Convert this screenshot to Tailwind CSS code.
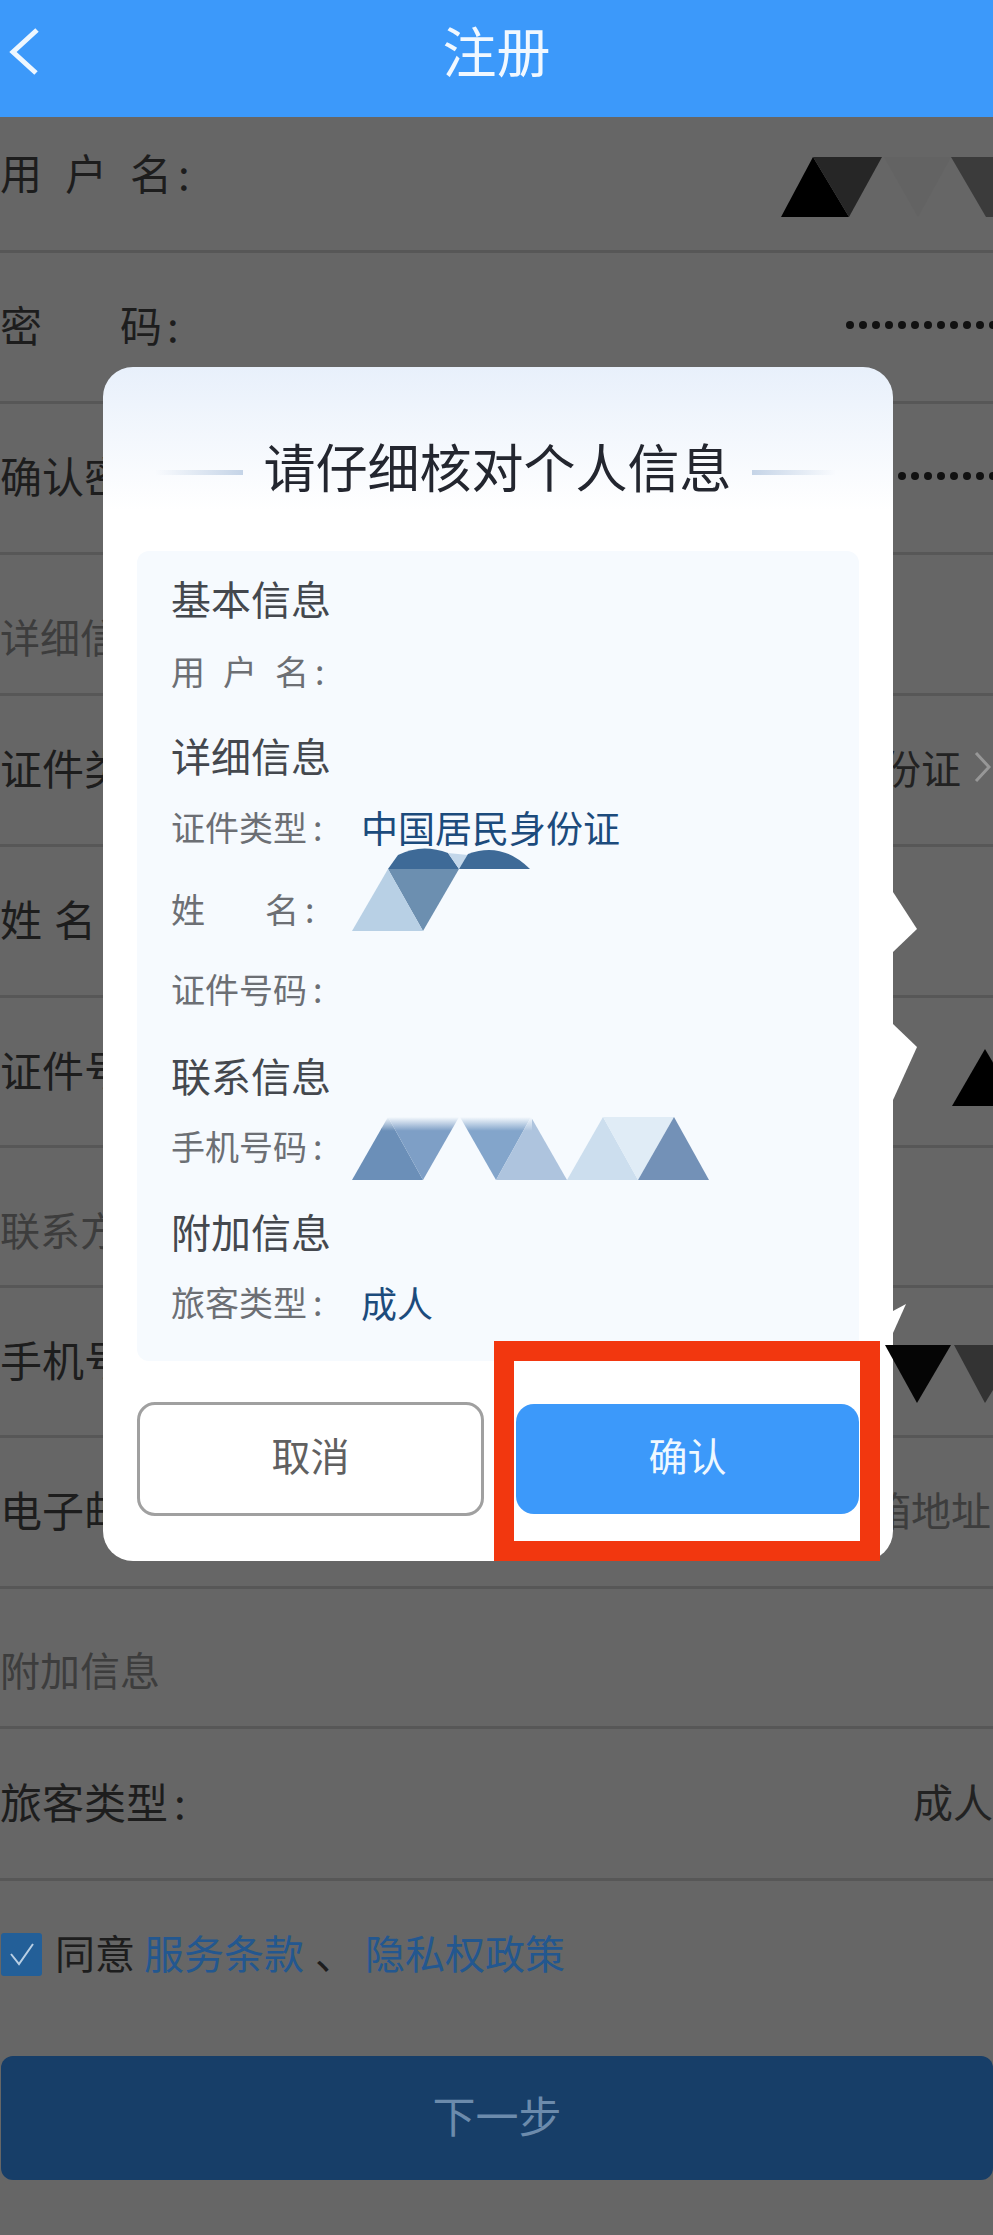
<!DOCTYPE html>
<html lang="zh-CN">
<head>
  <meta charset="UTF-8">
  <meta name="viewport" content="width=device-width, initial-scale=1.0">
  <title>注册</title>
  <script src="https://cdn.jsdelivr.net/npm/@tailwindcss/browser@4"></script>
</head>
<body class="bg-[#666666] font-['Noto_Sans_CJK_SC','Liberation_Sans',sans-serif]">
  <div class="relative w-[993px] h-[2235px] overflow-hidden text-[42px] leading-[48px] text-[#1d1d1d]">

    <!-- header -->
    <header class="relative h-[117px] bg-[#3c99fa] flex items-center justify-center text-[54px] text-[#f1f8ff]">
      <svg class="absolute left-[6px] top-[26px]" width="38" height="52" viewBox="0 0 38 52" fill="none" stroke="#eef7ff" stroke-width="5">
        <path d="M31 4 L7 26 L30 47"/>
      </svg>
      <span class="relative top-[-9px]">注册</span>
    </header>

    <!-- form rows behind the dialog -->
    <div class="h-[136px] border-b-[3px] border-[#575757] flex items-center justify-between pb-[24px]">
      <span><span class="tracking-[23px]">用户</span>名<span class="ml-[6px]">:</span></span>
    </div>
    <div class="h-[151px] border-b-[3px] border-[#575757] flex items-center justify-between pb-[6px]">
      <span><span class="inline-block w-[120px]">密</span>码<span class="ml-[5px]">:</span></span>
      <span class="flex gap-[5px] mr-[-4px] relative top-[1px]">
        <i class="w-2 h-2 rounded-full bg-[#111]"></i><i class="w-2 h-2 rounded-full bg-[#111]"></i><i class="w-2 h-2 rounded-full bg-[#111]"></i><i class="w-2 h-2 rounded-full bg-[#111]"></i><i class="w-2 h-2 rounded-full bg-[#111]"></i><i class="w-2 h-2 rounded-full bg-[#111]"></i><i class="w-2 h-2 rounded-full bg-[#111]"></i><i class="w-2 h-2 rounded-full bg-[#111]"></i><i class="w-2 h-2 rounded-full bg-[#111]"></i><i class="w-2 h-2 rounded-full bg-[#111]"></i><i class="w-2 h-2 rounded-full bg-[#111]"></i><i class="w-2 h-2 rounded-full bg-[#111]"></i>
      </span>
    </div>
    <div class="h-[151px] border-b-[3px] border-[#575757] flex items-center justify-between pb-[6px]">
      <span>确认密码:</span>
      <span class="flex gap-[5px] mr-[-4px] relative top-[1px]">
        <i class="w-2 h-2 rounded-full bg-[#111]"></i><i class="w-2 h-2 rounded-full bg-[#111]"></i><i class="w-2 h-2 rounded-full bg-[#111]"></i><i class="w-2 h-2 rounded-full bg-[#111]"></i><i class="w-2 h-2 rounded-full bg-[#111]"></i><i class="w-2 h-2 rounded-full bg-[#111]"></i><i class="w-2 h-2 rounded-full bg-[#111]"></i><i class="w-2 h-2 rounded-full bg-[#111]"></i>
      </span>
    </div>
    <div class="h-[141px] border-b-[3px] border-[#575757] flex items-center pt-[24px] text-[40px] text-[#3d3d3d]">
      <span>详细信息</span>
    </div>
    <div class="h-[151px] border-b-[3px] border-[#575757] flex items-center justify-between pb-[6px]">
      <span>证件类型:</span>
      <span class="flex items-center text-[40px] text-[#222]">中国居民身份证
        <svg class="ml-[13px] mr-[2px]" width="17" height="30" viewBox="0 0 17 30" fill="none" stroke="#979797" stroke-width="3"><path d="M2 1 L15 15 L2 29"/></svg>
      </span>
    </div>
    <div class="h-[151px] border-b-[3px] border-[#575757] flex items-center pb-[6px]">
      <span><span class="tracking-[12px]">姓</span>名</span>
    </div>
    <div class="h-[150px] border-b-[3px] border-[#575757] flex items-center pb-[6px]">
      <span>证件号码:</span>
    </div>
    <div class="h-[140px] border-b-[3px] border-[#575757] flex items-center pt-[24px] text-[40px] text-[#3d3d3d]">
      <span>联系方式</span>
    </div>
    <div class="h-[150px] border-b-[3px] border-[#575757] flex items-center pb-[6px]">
      <span>手机号码:</span>
    </div>
    <div class="h-[151px] border-b-[3px] border-[#575757] flex items-center justify-between pb-[6px]">
      <span>电子邮箱:</span>
      <span class="text-[40px] text-[#3d3d3d] mr-[2px]">电子邮箱地址</span>
    </div>
    <div class="h-[140px] border-b-[3px] border-[#575757] flex items-center pt-[22px] text-[40px] text-[#3d3d3d]">
      <span>附加信息</span>
    </div>
    <div class="h-[152px] border-b-[3px] border-[#575757] flex items-center justify-between pb-[6px]">
      <span>旅客类型<span class="ml-[6px]">:</span></span>
      <span class="text-[40px] text-[#222]">成人</span>
    </div>

    <!-- agreement -->
    <div class="mt-[47px] h-[48px] pl-px flex items-center text-[40px] text-[#1d1d1d]">
      <span class="w-[41px] h-[43px] rounded-[3px] bg-[#235f98] flex items-center justify-center mr-[13px] relative top-[2px]">
        <svg width="26" height="24" viewBox="0 0 26 24" fill="none" stroke="#b9cfe4" stroke-width="2"><path d="M2 12 L10 22 L24 2"/></svg>
      </span>
      <span>同意</span>
      <span class="ml-[9px] text-[#23578f]">服务条款</span>
      <span class="ml-[11px] text-[#1d1d1d]">、</span>
      <span class="ml-[10px] text-[#23578f]">隐私权政策</span>
    </div>

    <!-- next button -->
    <div class="absolute left-px right-0 top-[2056px] h-[124px] rounded-[12px] bg-[#173e68] flex items-center justify-center text-[43px] text-[#6c8bac]">
      <span class="relative top-[-4px]">下一步</span>
    </div>

    <!-- dialog -->
    <div class="absolute left-[103px] top-[367px] w-[790px] h-[1194px] rounded-[30px] bg-linear-to-b from-[#e8f0fb] to-white to-[12%] px-[34px]">
      <div class="h-[184px] flex items-center justify-between pl-[18px] pr-[23px]">
        <span class="w-[88px] h-[5px] mt-[26px] bg-linear-to-r from-transparent to-[#c5d4e7]"></span>
        <h2 class="text-[52px] leading-[60px] mt-[14px] text-[#23262f] font-normal whitespace-nowrap">请仔细核对个人信息</h2>
        <span class="w-[84px] h-[5px] mt-[26px] bg-linear-to-l from-transparent to-[#c5d4e7]"></span>
      </div>

      <div class="relative h-[810px] rounded-[12px] bg-[#f6fafe] pl-[34px] pt-[23px] text-[34px] leading-[40px] text-[#6c6f74]">
        <h3 class="h-[48px] text-[40px] leading-[48px] font-normal text-[#44484e]">基本信息</h3>
        <div class="mt-[29px] h-[40px]"><span class="tracking-[18px]">用户</span>名<span class="ml-[6px]">:</span></div>

        <h3 class="mt-[40px] h-[48px] text-[40px] leading-[48px] font-normal text-[#44484e]">详细信息</h3>
        <div class="mt-[28px] h-[40px] flex">
          <span class="w-[190px]">证件类型<span class="ml-[6px]">:</span></span><span class="text-[37px] text-[#1c4b7c]">中国居民身份证</span>
        </div>
        <div class="mt-[42px] h-[40px]"><span class="inline-block w-[94px]">姓</span>名<span class="ml-[6px]">:</span></div>
        <div class="mt-[40px] h-[40px]">证件号码<span class="ml-[6px]">:</span></div>

        <h3 class="mt-[42px] h-[48px] text-[40px] leading-[48px] font-normal text-[#44484e]">联系信息</h3>
        <div class="mt-[27px] h-[40px]">手机号码<span class="ml-[6px]">:</span></div>

        <h3 class="mt-[41px] h-[48px] text-[40px] leading-[48px] font-normal text-[#44484e]">附加信息</h3>
        <div class="mt-[27px] h-[40px] flex">
          <span class="w-[190px]">旅客类型<span class="ml-[6px]">:</span></span><span class="text-[36px] text-[#1c4b7c]">成人</span>
        </div>

        <!-- name mosaic -->
        <svg class="absolute left-[215px] top-[296px]" width="180" height="85" viewBox="0 0 180 85">
          <path d="M36 22 L46 8 Q70 -4 96 6 L107 22 Z" fill="#3e6a97"/>
          <polygon points="96,6 116,8 107,22" fill="#c3d7ea"/>
          <path d="M107 22 L116 7 Q150 -6 178 22 Z" fill="#3e6a97"/>
          <polygon points="36,22 107,22 71,84" fill="#6c8fb0"/>
          <polygon points="36,22 71,84 0,84" fill="#b8d0e5"/>
        </svg>
        <!-- phone mosaic -->
        <svg class="absolute left-[215px] top-[566px]" width="357" height="63" viewBox="0 0 357 63">
          <defs>
            <linearGradient id="fade" x1="0" y1="0" x2="0" y2="1">
              <stop offset="0" stop-color="#f6fafe"/><stop offset="0.22" stop-color="#f6fafe" stop-opacity="0"/>
            </linearGradient>
          </defs>
          <polygon points="36,0 71,63 0,63" fill="#6b8fb8"/>
          <polygon points="36,0 107,0 71,63" fill="#7e9fc6"/>
          <polygon points="108,0 179,0 144,63" fill="#83a5cb"/>
          <polygon points="179,0 215,63 144,63" fill="#aec4de"/>
          <polygon points="251,0 286,63 215,63" fill="#ccdeee"/>
          <polygon points="251,0 322,0 286,63" fill="#e0ecf6"/>
          <polygon points="322,0 357,63 286,63" fill="#7391b7"/>
          <rect x="30" width="150" height="63" fill="url(#fade)"/>
        </svg>
      </div>

      <div class="mt-[41px] flex items-center gap-[32px]">
        <button class="w-[347px] h-[114px] rounded-[18px] border-[3px] border-[#a0a0a0] bg-white text-[39px] text-[#606060] pb-[10px]">取消</button>
        <button class="w-[343px] h-[110px] rounded-[18px] bg-[#3c99fa] text-[39px] text-[#eef8ff] pb-[10px]">确认</button>
      </div>

      <!-- red highlight around confirm -->
      <div class="absolute left-[391px] top-[974px] w-[386px] h-[220px] border-[20px] border-[#f2370f]"></div>
    </div>

    <!-- mosaics painted over everything -->
    <svg class="absolute left-[781px] top-[157px]" width="212" height="60" viewBox="0 0 212 60">
      <polygon points="32,0 68,60 0,60" fill="#000"/>
      <polygon points="32,0 101,0 68,60" fill="#262626"/>
      <polygon points="103,0 170,0 137,60" fill="#636363"/>
      <polygon points="170,0 212,0 212,60 205,60" fill="#3b3b3b"/>
    </svg>
    <svg class="absolute left-[885px] top-[1024px]" width="108" height="82" viewBox="0 0 108 82">
      <polygon points="100,25 67,82 134,82" fill="#000"/>
    </svg>
    <svg class="absolute left-[885px] top-[1303px]" width="108" height="100" viewBox="0 0 108 100">
      <polygon points="8,8 21,1 8,30" fill="#fff"/>
      <polygon points="0,42 66,42 32,100" fill="#050505"/>
      <polygon points="69,42 136,42 100,100" fill="#333"/>
    </svg>
    <svg class="absolute left-[893px] top-[892px]" width="26" height="62" viewBox="0 0 26 62">
      <polygon points="0,0 24,37 0,60" fill="#fff"/>
    </svg>
    <svg class="absolute left-[893px] top-[1024px]" width="26" height="82" viewBox="0 0 26 82">
      <polygon points="0,0 24,23 0,76" fill="#fff"/>
    </svg>
  </div>
</body>
</html>
